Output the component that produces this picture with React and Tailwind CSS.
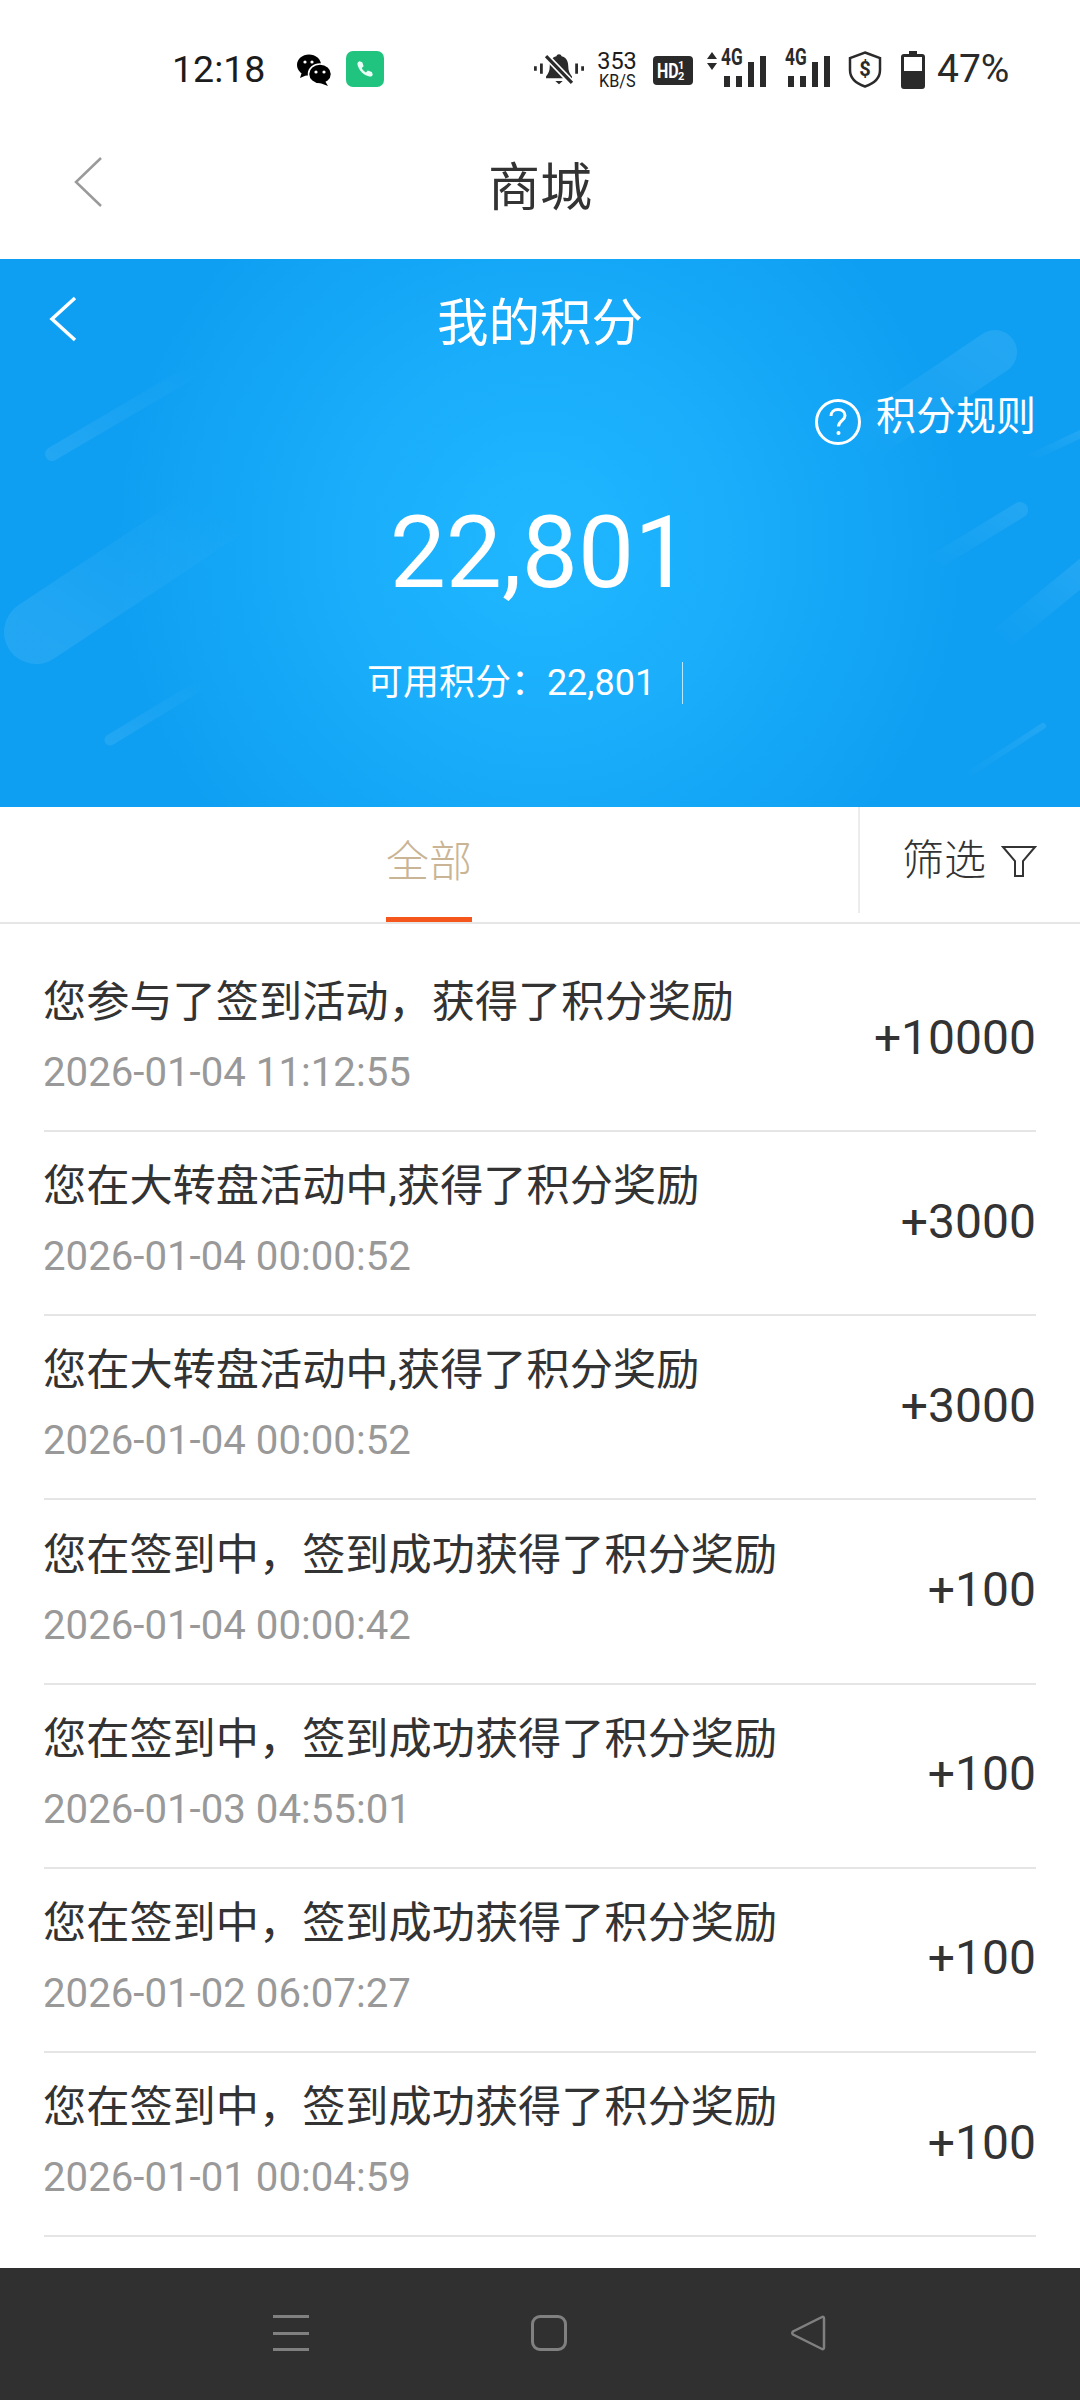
const records = [
  { title: "您参与了签到活动，获得了积分奖励", time: "2026-01-04 11:12:55", points: "+10000" },
  { title: "您在大转盘活动中,获得了积分奖励", time: "2026-01-04 00:00:52", points: "+3000" },
  { title: "您在大转盘活动中,获得了积分奖励", time: "2026-01-04 00:00:52", points: "+3000" },
  { title: "您在签到中，签到成功获得了积分奖励", time: "2026-01-04 00:00:42", points: "+100" },
  { title: "您在签到中，签到成功获得了积分奖励", time: "2026-01-03 04:55:01", points: "+100" },
  { title: "您在签到中，签到成功获得了积分奖励", time: "2026-01-02 06:07:27", points: "+100" },
  { title: "您在签到中，签到成功获得了积分奖励", time: "2026-01-01 00:04:59", points: "+100" },
];

function Signal({ arrows }) {
  return (
    <div className="relative w-[60px] h-[36px]">
      {arrows && (
        <svg className="absolute left-[-12px] top-[0px]" width="12" height="20" viewBox="0 0 12 20">
          <path d="M6 1l5 7H1zM6 19l-5-7h10z" fill="#2a2a2a" />
        </svg>
      )}
      <span className="absolute left-[3px] top-[-5px] text-[23px] leading-[24px] font-bold text-[#2a2a2a] scale-x-75 origin-left">4G</span>
      <div className="absolute left-[6px] bottom-0 flex items-end gap-[6px]">
        <div className="w-[6px] h-[11px] bg-[#2a2a2a]" />
        <div className="w-[6px] h-[11px] bg-[#2a2a2a]" />
        <div className="w-[6px] h-[25px] bg-[#2a2a2a]" />
        <div className="w-[6px] h-[31px] bg-[#2a2a2a]" />
      </div>
    </div>
  );
}

function StatusBar() {
  return (
    <div className="h-[88px] pt-[49px] pl-[172px] flex items-start text-[#1c1c1c]">
      <span className="text-[37.500px] leading-[40px] w-[124px]">12:18</span>
      <svg width="36" height="32" viewBox="0 0 36 32" className="mt-[5px]">
        <ellipse cx="13" cy="11" rx="12" ry="10.500" fill="#000" />
        <path d="M6 18l-2 6 7-3z" fill="#000" />
        <ellipse cx="24" cy="20" rx="11.500" ry="10" fill="#000" stroke="#fff" strokeWidth="1.500" />
        <path d="M29 27l3 5-8-3z" fill="#000" />
        <circle cx="9" cy="8" r="1.600" fill="#fff" />
        <circle cx="16" cy="8" r="1.600" fill="#fff" />
        <circle cx="20" cy="18" r="1.600" fill="#fff" />
        <circle cx="28" cy="18" r="1.600" fill="#fff" />
      </svg>
      <div className="ml-[14px] mt-[2px] w-[38px] h-[36px] rounded-[7px] bg-[#21c47f] flex items-center justify-center">
        <svg width="22" height="22" viewBox="0 0 24 24">
          <path d="M6 3.500l3 1 1.500 4.500-2 2c1 2.200 2.400 3.700 4.500 4.700l2-2 4.500 1.500 1 3c-.6 1.600-2 2.300-3.700 2C10.600 19 5 13.400 3.800 7.200 3.500 5.500 4.400 4 6 3.500z" fill="#eafff5" />
        </svg>
      </div>

      <svg width="50" height="38" viewBox="0 0 54 38" className="ml-[150px] mt-[1px]">
        <path d="M27 3c1.500 0 2.500 1 2.800 2.200 5 1.300 7.200 5.300 7.200 10.800 0 5 1.500 8 4 11v2H13v-2c2.500-3 4-6 4-11 0-5.500 2.200-9.500 7.200-10.800C24.500 4 25.500 3 27 3z" fill="#2a2a2a" />
        <path d="M23 32h8l-4 3.500z" fill="#2a2a2a" />
        <path d="M13 5l28 29" stroke="#fff" strokeWidth="7" />
        <path d="M13 5l28 29" stroke="#2a2a2a" strokeWidth="3.500" />
        <path d="M8 13v11M1.500 16v5M46 13v11M52.500 16v5" stroke="#2a2a2a" strokeWidth="3" />
      </svg>
      <div className="ml-[12px] w-[42px] flex flex-col items-center mt-[2px] text-[#1c1c1c]">
        <span className="text-[23.500px] leading-[20px]">353</span>
        <span className="text-[18px] leading-[17px] mt-[1px] scale-x-90">KB/S</span>
      </div>
      <div className="ml-[15px] mt-[7px] w-[40px] h-[29px] rounded-[4px] bg-[#2a2a2a] flex items-center pl-[4px] gap-[1px] text-white overflow-hidden">
        <span className="text-[20px] leading-[20px] font-bold scale-x-80 origin-left w-[20px]">HD</span>
        <span className="flex flex-col text-[11px] leading-[11px] font-bold">
          <span>1</span>
          <span>2</span>
        </span>
      </div>
      <div className="ml-[25px] mt-[2px]">
        <Signal arrows />
      </div>
      <div className="ml-[4px] mt-[2px]">
        <Signal />
      </div>
      <svg width="34" height="37" viewBox="0 0 34 37" className="ml-[6px] mt-[2px]">
        <path d="M17 1.500l15 5.500v12c0 8-6 13.500-15 16.500C8 32.500 2 27 2 19V7z" fill="none" stroke="#2a2a2a" strokeWidth="2.500" />
        <text x="17" y="25" textAnchor="middle" fontSize="20" fontWeight="700" fill="#2a2a2a">$</text>
      </svg>
      <svg width="24" height="38" viewBox="0 0 24 38" className="ml-[19px] mt-[2px]">
        <path d="M8 0h8v3h5a3 3 0 013 3v29a3 3 0 01-3 3H3a3 3 0 01-3-3V6a3 3 0 013-3h5z" fill="#2a2a2a" />
        <rect x="3" y="6" width="18" height="14" fill="#fff" />
      </svg>
      <span className="ml-[12px] text-[39px] leading-[40px] text-[#2a2a2a]">47%</span>
    </div>
  );
}

function Banner() {
  return (
    <div className="relative h-[548px] mt-[1px] bg-[radial-gradient(circle_at_50%_52%,#20b7ff_0%,#1aaefb_30%,#0f9ff2_70%)] text-white overflow-hidden">
      <svg className="absolute inset-0" width="1080" height="548" viewBox="0 0 1080 548">
        <defs>
          <linearGradient id="fadeUp" x1="0" y1="1" x2="1" y2="0">
            <stop offset="0" stopColor="#fff" stopOpacity="0.08" />
            <stop offset="1" stopColor="#fff" stopOpacity="0" />
          </linearGradient>
          <linearGradient id="fadeDown" x1="1" y1="0" x2="0" y2="1">
            <stop offset="0" stopColor="#fff" stopOpacity="0.08" />
            <stop offset="1" stopColor="#fff" stopOpacity="0" />
          </linearGradient>
        </defs>
        <g transform="translate(0 -259)" strokeLinecap="round" fill="none">
          <path d="M36 632L220 510" strokeWidth="64" stroke="url(#fadeUp)" />
          <path d="M52 454L200 367" strokeWidth="14" stroke="url(#fadeUp)" />
          <path d="M110 740L207 681" strokeWidth="11" stroke="url(#fadeUp)" />
          <path d="M995 352L850 450" strokeWidth="44" stroke="url(#fadeDown)" />
          <path d="M1020 510L930 565" strokeWidth="16" stroke="url(#fadeDown)" />
          <path d="M1085 570L1000 640" strokeWidth="24" stroke="url(#fadeDown)" />
          <path d="M1043 726L966 776" strokeWidth="6" stroke="url(#fadeDown)" />
          <path d="M1085 432L1030 458" strokeWidth="8" stroke="url(#fadeDown)" />
        </g>
      </svg>
      <div className="relative h-[126px] flex items-center justify-center">
        <svg className="absolute left-[48px] top-[37px]" width="30" height="46" viewBox="0 0 30 46">
          <path d="M27 2L4 23l23 21" fill="none" stroke="#fff" strokeWidth="3.500" />
        </svg>
        <span className="text-[51.500px] leading-[60px] mt-[4px]">我的积分</span>
      </div>
      <div className="relative h-[64px] pr-[44px] flex items-start justify-end">
        <svg width="48" height="48" viewBox="0 0 48 48" className="mt-[13px] mr-[14px]">
          <circle cx="24" cy="24" r="21.500" fill="none" stroke="#fff" strokeWidth="3" />
          <path d="M17 18c0-4 3-6.500 7-6.500s7 2.500 7 6c0 5-6.500 5.500-6.500 11" fill="none" stroke="#fff" strokeWidth="3" />
          <circle cx="24.500" cy="35" r="2" fill="#fff" />
        </svg>
        <span className="text-[40px] leading-[52px] mt-[6px]">积分规则</span>
      </div>
      <div className="relative text-center text-[100px] leading-[118px] mt-[45px]">22,801</div>
      <div className="relative flex justify-center items-center mt-[50px] h-[42px] pr-[30px]">
        <span className="text-[36px] leading-[42px]">可用积分：22,801</span>
        <div className="w-[1px] h-[42px] bg-white/70 ml-[27px]" />
      </div>
    </div>
  );
}

function Tabs() {
  return (
    <div className="relative h-[117px] flex border-b-2 border-[#e6e6e6]">
      <div className="w-[858px] flex justify-center">
        <div className="w-[86px] h-[115px] flex flex-col items-center pt-[30px] border-b-[5px] border-[#f4561b]">
          <span className="text-[43px] leading-[50px] font-light text-[#c9b596]">全部</span>
        </div>
      </div>
      <div className="h-[106px] flex items-center pl-[42px] border-l-2 border-[#ececec] text-[#333]">
        <span className="text-[42px] leading-[50px] font-light mt-[1px]">筛选</span>
        <svg width="36" height="33" viewBox="0 0 36 33" className="ml-[15px] mt-[2px]">
          <path d="M2 2h32L22 16v15h-8V16z" fill="none" stroke="#333" strokeWidth="2" />
        </svg>
      </div>
    </div>
  );
}

function RecordRow({ title, time, points }) {
  return (
    <div className="h-[184.170px] flex items-center justify-between border-b-2 border-[#e5e5e5]">
      <div className="mt-[-4px] ml-[-1px]">
        <div className="text-[43.200px] leading-[52px] text-[#333]">{title}</div>
        <div className="text-[40.200px] leading-[48px] text-[#999] mt-[20px]">{time}</div>
      </div>
      <div className="text-[48px] leading-[54px] text-[#333] mt-[-3px]">{points}</div>
    </div>
  );
}

export default function App() {
  return (
    <div className="relative w-[1080px] h-[2400px] bg-white overflow-hidden font-[family-name:Roboto,'Noto_Sans_CJK_SC',sans-serif]">
      <StatusBar />
      <div className="h-[170px] relative flex items-center justify-center">
        <svg className="absolute left-[72px] top-[68px]" width="32" height="52" viewBox="0 0 32 52">
          <path d="M29 2L4 26l25 24" fill="none" stroke="#9a9a9a" strokeWidth="2.500" />
        </svg>
        <span className="text-[52px] leading-[60px] text-[#333] mt-[32px]">商城</span>
      </div>
      <Banner />
      <Tabs />
      <div className="px-[44px] pt-[24px]">
        {records.map((r, i) => (
          <RecordRow key={i} {...r} />
        ))}
      </div>
      <div className="absolute left-0 right-0 bottom-0 h-[132px] bg-[#303030] flex items-center pb-[2px]">
        <div className="ml-[273px] w-[36px] h-[36px] flex flex-col justify-between">
          <div className="h-[3px] bg-[#808080]" />
          <div className="h-[3px] bg-[#808080]" />
          <div className="h-[3px] bg-[#808080]" />
        </div>
        <div className="ml-[222px] w-[36px] h-[36px] rounded-[9px] border-[3px] border-[#808080]" />
        <svg width="36" height="38" viewBox="0 0 36 38" className="ml-[223px]">
          <path d="M32 3c1-.6 2 0 2 1.500v29c0 1.500-1 2-2 1.500L3 20.500c-1-.8-1-2 0-3z" fill="none" stroke="#808080" strokeWidth="2.500" />
        </svg>
      </div>
    </div>
  );
}
